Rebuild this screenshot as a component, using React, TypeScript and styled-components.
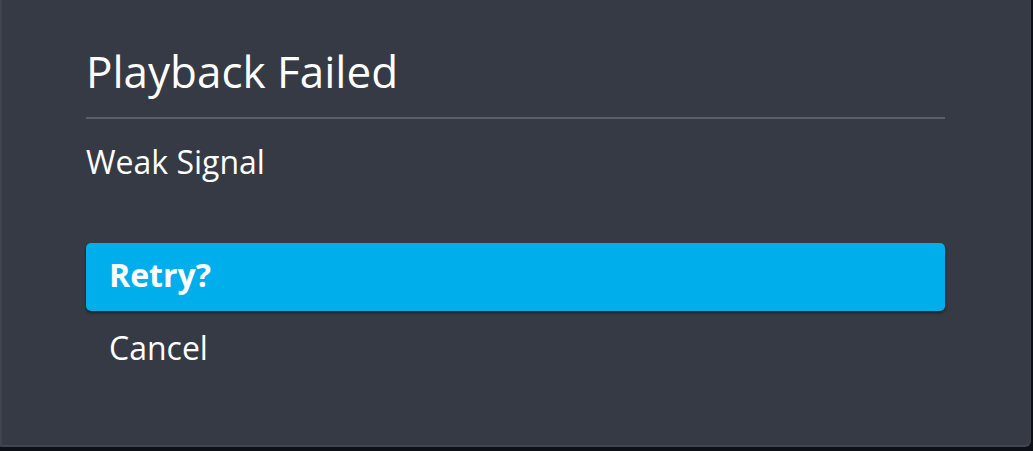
import styled, { createGlobalStyle } from 'styled-components';

const GlobalStyle = createGlobalStyle`
  html, body {
    margin: 0;
    padding: 0;
    background-color: #0d1016;
  }
  body {
    font-family: 'Open Sans', 'Liberation Sans', sans-serif;
    -webkit-font-smoothing: antialiased;
  }
`;

const Dialog = styled.div`
  box-sizing: border-box;
  width: 1031px;
  height: 447px;
  display: flex;
  flex-direction: column;
  padding: 43px 85px 0 84px;
  background-color: #353a44;
  border-left: 2px solid #3f444e;
  border-bottom: 2px solid #41464f;
  border-right: 1px solid #3c414a;
  border-bottom-right-radius: 6px;
  color: #ffffff;
`;

const Title = styled.h1`
  margin: 0;
  font-size: 44px;
  font-weight: 400;
  line-height: 56px;
`;

const Divider = styled.hr`
  margin: 18px 0 0 0;
  border: none;
  height: 2px;
  background-color: #5a5f69;
`;

const Message = styled.p`
  margin: 23px 0 0 0;
  font-size: 32px;
  line-height: 40px;
  font-weight: 400;
`;

const Options = styled.div`
  display: flex;
  flex-direction: column;
  margin-top: 61px;
`;

const Option = styled.button<{ $active?: boolean }>`
  box-sizing: border-box;
  display: flex;
  align-items: center;
  height: 68px;
  margin-top: ${p => (p.$active ? '0' : '3px')};
  padding: 0 23px ${p => (p.$active ? '5px' : '0')};
  border: none;
  border-radius: 5px;
  font-family: inherit;
  font-size: 32px;
  line-height: 40px;
  font-weight: ${p => (p.$active ? 700 : 400)};
  color: #ffffff;
  text-align: left;
  background-color: ${p => (p.$active ? '#01aeec' : 'transparent')};
  box-shadow: ${p => (p.$active ? '0 2px 3px rgba(0, 0, 0, 0.45)' : 'none')};
  cursor: pointer;
`;

export default function App() {
  return (
    <>
      <GlobalStyle />
      <Dialog>
        <Title>Playback Failed</Title>
        <Divider />
        <Message>Weak Signal</Message>
        <Options>
          <Option $active>Retry?</Option>
          <Option>Cancel</Option>
        </Options>
      </Dialog>
    </>
  );
}
